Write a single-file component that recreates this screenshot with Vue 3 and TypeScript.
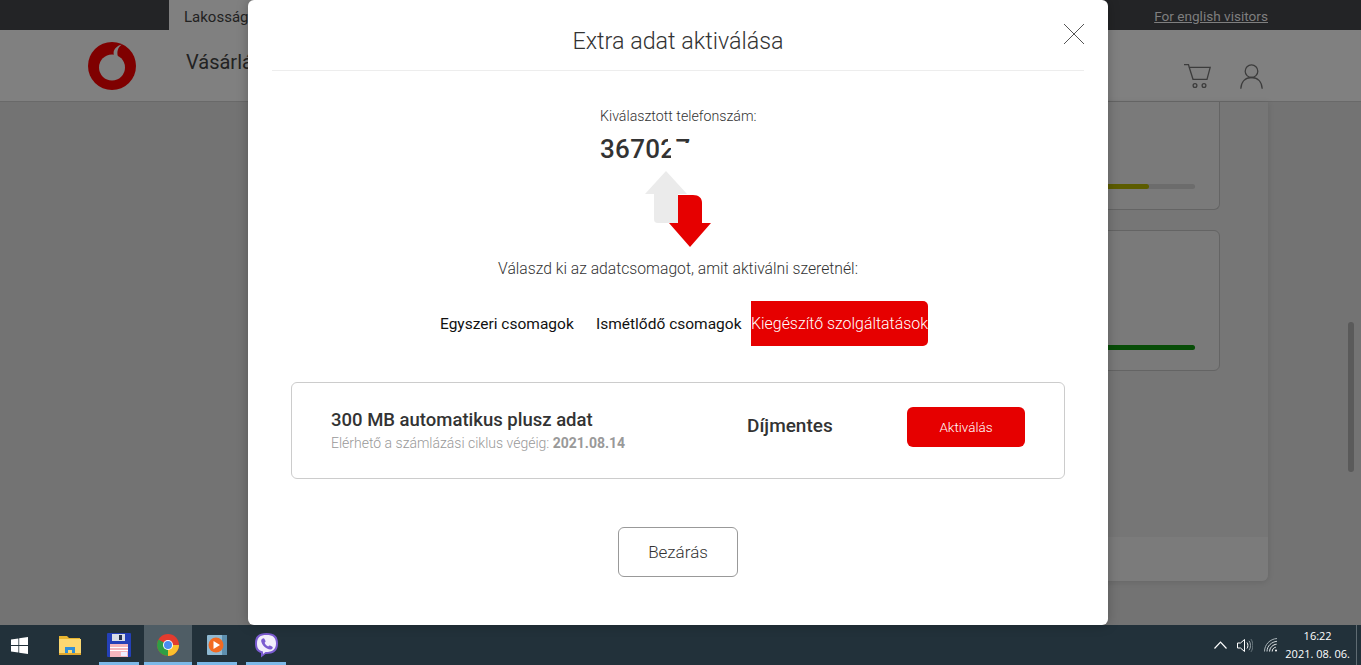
<script setup lang="ts">
interface Tab {
	label: string;
	active?: boolean;
}

const tabs: Tab[] = [
	{ label: 'Egyszeri csomagok' },
	{ label: 'Ismétlődő csomagok' },
	{ label: 'Kiegészítő szolgáltatások', active: true },
];
</script>

<template>
	<div class="page">
		<div class="topbar">
			<div class="topbar-tab">Lakosság</div>
			<a class="topbar-link">For english visitors</a>
		</div>

		<header class="header">
			<svg class="logo" width="48" height="48" viewBox="0 0 48 48">
				<circle cx="24" cy="24" r="24" fill="#7f0000" />
				<circle cx="24" cy="25.500" r="13" fill="#808080" />
				<path d="M34 2.500C29.500 3.500 26 6.500 25.600 10.500C25.500 12 26 13.500 26.500 14.500L30 15C28.500 9.500 30 5 34 2.500Z" fill="#808080" />
			</svg>
			<nav class="header-nav">Vásárlás</nav>
			<div class="header-icons">
				<svg width="27" height="25" viewBox="0 0 27 25" fill="none" stroke="#3c3c3c" stroke-width="1.3">
					<path d="M0 .7H4.500L5.200 3.300H26.200L23 15.300H9L5.200 3.300" />
					<circle cx="11" cy="21.500" r="1.900" />
					<circle cx="20" cy="21.500" r="1.900" />
				</svg>
				<svg width="23" height="25" viewBox="0 0 23 25" fill="none" stroke="#3c3c3c" stroke-width="1.3">
					<circle cx="11.500" cy="7.200" r="6.300" />
					<path d="M.8 24.800C1.200 17.500 5.500 13.500 11.500 13.500C17.500 13.500 21.800 17.500 22.200 24.800" />
				</svg>
			</div>
		</header>

		<main class="main">
			<section class="panel">
				<div class="panel-body">
					<div class="usage usage-first">
						<div class="bar"><div class="bar-fill bar-yellow"></div></div>
					</div>
					<div class="usage usage-second">
						<div class="bar"><div class="bar-fill bar-green"></div></div>
					</div>
				</div>
				<div class="panel-foot"></div>
			</section>
		</main>

		<footer class="taskbar">
			<div class="task-start">
				<svg width="17" height="17" viewBox="0 0 17 17" fill="#fff">
					<path d="M0 2.500L7.400 1.400V8H0Z" />
					<path d="M8.200 1.300L17 0V8H8.200Z" />
					<path d="M0 9H7.400V15.600L0 14.500Z" />
					<path d="M8.200 9H17V17L8.200 15.700Z" />
				</svg>
			</div>
			<div class="task-item task-folder">
				<svg width="22" height="20" viewBox="0 0 22 20">
					<path d="M0 1H8L10 3H21V18H0Z" fill="#e9b530" />
					<path d="M0 4H22V18H0Z" fill="#fbd871" />
					<path d="M6 18V12H16V18H13V15H9V18Z" fill="#2f8fd8" />
					<rect x="0" y="18" width="22" height="2" fill="#e0a82e" />
				</svg>
			</div>
			<div class="task-item task-open">
				<svg width="24" height="24" viewBox="0 0 24 24">
					<rect width="24" height="24" rx="1" fill="#2440b8" />
					<rect x="5" y="1" width="13" height="7" fill="#d8dde8" />
					<rect x="12" y="2" width="3" height="5" fill="#26324e" />
					<rect x="3" y="11" width="18" height="13" fill="#f5b7bd" />
					<rect x="3" y="14" width="18" height="1" fill="#fff" />
					<rect x="3" y="17" width="18" height="1" fill="#fff" />
					<rect x="14" y="19" width="6" height="4" fill="#eef" />
				</svg>
			</div>
			<div class="task-item task-open task-active">
				<svg width="22" height="22" viewBox="0 0 22 22">
					<circle cx="11" cy="11" r="11" fill="#e33b2e" />
					<path d="M11 11L1.500 5.500A11 11 0 0 0 11 22Z" fill="#2f9e44" />
					<path d="M11 11H22A11 11 0 0 1 11 22Z" fill="#fbc02d" />
					<circle cx="11" cy="11" r="5" fill="#fff" />
					<circle cx="11" cy="11" r="4" fill="#4a8df0" />
				</svg>
			</div>
			<div class="task-item task-open">
				<svg width="20" height="20" viewBox="0 0 20 20">
					<rect width="20" height="20" rx="1" fill="#8fb9d2" />
					<rect x="15" width="5" height="20" fill="#5e8fae" />
					<circle cx="9" cy="10" r="7.500" fill="#f26a21" />
					<path d="M6.500 6L13 10L6.500 14Z" fill="#fff" />
				</svg>
			</div>
			<div class="task-item task-open">
				<svg width="23" height="25" viewBox="0 0 23 25">
					<path d="M11.500 0C3 0 0 3.500 0 10.500C0 16 2 19 6 20V24.500L10.500 21C19 21 23 18 23 10.500C23 3.500 20 0 11.500 0Z" fill="#7a5bd0" />
					<path d="M11.500 2C5 2 2 4.500 2 10.500C2 15 3.500 17.500 8 18.500V21L10.500 19C17.500 19 21 16.500 21 10.500C21 4.500 18 2 11.500 2Z" fill="#f2eefc" />
					<path d="M7 6C8 5 9 5 9.500 6L10.500 8C10.800 8.700 10 9.300 9.600 9.800C10.300 11.500 11.500 12.700 13.200 13.400C13.800 13 14.300 12.200 15 12.500L17 13.500C18 14 18 15 17 16C15.500 17 14 16.600 12 15.500C9 13.800 7.300 11.800 6.400 9C6 7.600 6.200 6.800 7 6Z" fill="#7a5bd0" />
				</svg>
			</div>
			<div class="tray">
				<svg width="13" height="8" viewBox="0 0 13 8" fill="none" stroke="#fff" stroke-width="1.2">
					<path d="M.5 7.500L6.500 1.200L12.500 7.500" />
				</svg>
				<svg width="16" height="15" viewBox="0 0 16 15" fill="none" stroke="#fff">
					<path d="M.5 5H3.500L7.500 1.500V13.500L3.500 10H.5Z" />
					<path d="M10 4.500C11.200 6 11.200 9 10 10.500" />
					<path d="M12 2.800C14 5 14 10 12 12.200" stroke="#9aa5aa" />
					<path d="M14 1.200C16.400 4.500 16.400 10.500 14 13.800" stroke="#6f7c82" />
				</svg>
				<svg width="14" height="14" viewBox="0 0 14 14" fill="none" stroke="#f2f4f5">
					<path d="M.5 13.500C.5 6.500 6 1 13 .5" stroke="#aab4b8" />
					<path d="M3 13.500C3 8 7.500 3.800 13 3.300" stroke="#cfd6d9" />
					<path d="M5.600 13.500C5.600 9.600 8.800 6.600 12.600 6.200" />
					<path d="M8.200 13.500C8.200 11.200 9.800 9.600 11.800 9.200" />
					<circle cx="12" cy="12.600" r="1" fill="#fff" stroke="none" />
				</svg>
				<div class="clock">
					<span>16:22</span>
					<span>2021. 08. 06.</span>
				</div>
				<div class="show-desktop"></div>
			</div>
		</footer>

		<div class="scrollbar"></div>

		<div class="modal">
			<div class="modal-head">
				<h2 class="modal-title">Extra adat aktiválása</h2>
				<svg class="modal-close" width="22" height="22" viewBox="0 0 22 22" stroke="#555" stroke-width="1">
					<path d="M1 1L21 21M21 1L1 21" />
				</svg>
			</div>

			<div class="phone">
				<div class="phone-label">Kiválasztott telefonszám:</div>
				<div class="phone-number">367027<i class="mask-a"></i><i class="mask-b"></i></div>
			</div>

			<svg class="arrows" width="68" height="77" viewBox="0 0 68 77">
				<path d="M22 1L43 24H34V53H14C11 53 10 51.500 10 49V24H1Z" fill="#ebebeb" />
				<path d="M25 53H34V25H49C55 25 58 28 58 33V53H67L46 77Z" fill="#e60000" />
			</svg>

			<p class="prompt">Válaszd ki az adatcsomagot, amit aktiválni szeretnél:</p>

			<div class="tabs">
				<div v-for="tab in tabs" :key="tab.label" class="tab" :class="{ 'tab-active': tab.active }">{{ tab.label }}</div>
			</div>

			<div class="offer">
				<div class="offer-info">
					<div class="offer-name">300 MB automatikus plusz adat</div>
					<div class="offer-sub">Elérhető a számlázási ciklus végéig: <b>2021.08.14</b></div>
				</div>
				<div class="offer-price">Díjmentes</div>
				<button class="offer-btn">Aktiválás</button>
			</div>

			<button class="close-btn">Bezárás</button>
		</div>
	</div>
</template>

<style>
	body {
		overflow: hidden;
	}
</style>

<style scoped>
	.page {
		position: relative;
		display: flex;
		flex-direction: column;
		height: 665px;
		overflow: hidden;
		background: #737373;
		font-family: Roboto, "Liberation Sans", sans-serif;
	}
	.topbar {
		display: flex;
		align-items: center;
		justify-content: space-between;
		height: 30px;
		padding: 0 93px 0 169px;
		background: #232426;
		flex: none;
	}
		.topbar-tab {
			align-self: stretch;
			width: 120px;
			padding: 0 15px;
			background: #808080;
			color: #222;
			font-size: 15px;
			line-height: 35px;
		}
		.topbar-link {
			margin-top: 2px;
			color: #7f7f7f;
			font-size: 13.6px;
			text-decoration: underline;
		}
	.header {
		display: flex;
		align-items: center;
		height: 71px;
		padding: 0 98px 0 88px;
		background: #808080;
		border-bottom: 1px solid #696969;
		flex: none;
	}
		.logo {
			margin: 1px 50px 0 0;
		}
		.header-nav {
			color: #222;
			font-size: 20px;
			margin-bottom: 7px;
		}
		.header-icons {
			display: flex;
			gap: 29px;
			margin: 22px 0 0 auto;
		}
	.main {
		flex: 1;
		display: flex;
		justify-content: flex-end;
		align-items: flex-start;
		padding-right: 93px;
	}
		.panel {
			display: flex;
			flex-direction: column;
			width: 1000px;
			height: 479px;
			background: #767676;
			border-radius: 0 0 6px 6px;
			box-shadow: 0 1px 6px rgba(0, 0, 0, 0.12);
		}
			.panel-body {
				flex: 1;
				padding-right: 48px;
			}
			.usage {
				position: relative;
				border: 1px solid #646464;
				border-radius: 0 0 6px 6px;
				background: #7a7a7a;
				padding: 0 24px;
			}
			.usage-first {
				height: 107px;
				border-top: none;
			}
			.usage-second {
				height: 139px;
				margin-top: 20px;
				border-radius: 6px;
			}
			.bar {
				position: absolute;
				right: 24px;
				bottom: 20px;
				width: 900px;
				height: 5px;
				border-radius: 3px;
				background: #6c6c6c;
			}
				.bar-fill {
					height: 100%;
					border-radius: 3px;
				}
				.bar-yellow {
					width: 854px;
					background: #5c5c00;
				}
				.bar-green {
					width: 100%;
					background: #074d07;
				}
			.panel-foot {
				height: 44px;
				background: #7b7b7b;
				border-radius: 0 0 6px 6px;
			}
	.taskbar {
		display: flex;
		align-items: stretch;
		height: 40px;
		background: #22313a;
		flex: none;
	}
		.task-start {
			display: flex;
			align-items: center;
			justify-content: center;
			width: 38px;
		}
		.task-item {
			position: relative;
			display: flex;
			align-items: center;
			justify-content: center;
			width: 48px;
			margin-left: 1px;
		}
		.task-folder {
			margin-left: 8px;
		}
		.task-open::after {
			content: "";
			position: absolute;
			left: 4px;
			right: 4px;
			bottom: 0;
			height: 3px;
			background: #7cb9e8;
		}
		.task-active {
			background: #4f5d65;
		}
		.task-active::after {
			left: 0;
			right: 0;
		}
		.tray {
			display: flex;
			align-items: center;
			margin-left: auto;
			color: #fff;
		}
			.tray svg:nth-child(2) {
				margin-left: 10px;
			}
			.tray svg:nth-child(3) {
				margin-left: 11px;
			}
			.clock {
				display: flex;
				flex-direction: column;
				align-items: center;
				gap: 3px;
				margin: -2px 6px 0 7px;
				font-family: "Open Sans", sans-serif;
				font-size: 11px;
				line-height: 15px;
			}
			.show-desktop {
				align-self: stretch;
				width: 4px;
				border-left: 1px solid #5f6b72;
			}
	.scrollbar {
		position: absolute;
		left: 1348px;
		top: 322px;
		width: 6px;
		height: 150px;
		border-radius: 3px;
		background: #5a5a5a;
	}
	.modal {
		position: absolute;
		left: 248px;
		top: 0;
		display: flex;
		flex-direction: column;
		align-items: center;
		width: 860px;
		height: 625px;
		background: #fff;
		border-radius: 6px;
		box-shadow: 0 0 12px rgba(0, 0, 0, 0.25);
		color: #333;
	}
		.modal-head {
			position: relative;
			width: 812px;
			height: 70px;
			border-bottom: 1px solid #ededed;
			text-align: center;
		}
			.modal-title {
				margin: 0;
				padding-top: 25px;
				font-size: 23.3px;
				font-weight: 300;
				line-height: 32px;
				color: #333;
			}
			.modal-close {
				position: absolute;
				right: -1px;
				top: 23px;
			}
		.phone {
			align-self: flex-start;
			margin: 36px 0 0 352px;
		}
			.phone-label {
				font-size: 14.2px;
				line-height: 18px;
				font-weight: 300;
			}
			.phone-number {
				position: relative;
				margin-top: 9px;
				width: 90px;
				font-size: 26px;
				font-weight: 500;
				line-height: 30px;
				letter-spacing: 0.3px;
			}
				.mask-a {
					position: absolute;
					left: 71px;
					top: 9px;
					width: 30px;
					height: 22px;
					background: #fff;
				}
				.mask-b {
					position: absolute;
					left: 68px;
					top: 0;
					width: 6px;
					height: 14px;
					background: #fff;
				}
		.arrows {
			margin: 6px 0 0;
		}
		.prompt {
			margin: 12px 0 0;
			font-size: 15.7px;
			line-height: 20px;
			font-weight: 300;
		}
		.tabs {
			display: grid;
			grid-template-columns: 156px 155px 177px;
			margin: 22px 0 0 12px;
		}
			.tab {
				height: 45px;
				font-size: 15.5px;
				line-height: 46px;
				color: #111;
				white-space: nowrap;
			}
			.tab-active {
				background: #e60000;
				border-radius: 0 5px 5px 0;
				color: #fff;
				font-size: 15.9px;
				font-weight: 300;
				text-align: center;
			}
		.offer {
			display: flex;
			align-items: center;
			box-sizing: border-box;
			width: 774px;
			height: 97px;
			margin-top: 36px;
			padding: 0 39px;
			border: 1px solid #ccc;
			border-radius: 6px;
		}
			.offer-info {
				width: 416px;
				margin-top: -3px;
			}
				.offer-name {
					font-size: 18.500px;
					font-weight: 500;
					line-height: 24px;
					padding-top: 1px;
				}
				.offer-sub {
					margin-top: 2px;
					font-size: 14px;
					font-weight: 300;
					line-height: 18px;
					color: #999;
				}
					.offer-sub b {
						font-weight: 700;
					}
			.offer-price {
				width: 160px;
				font-size: 19px;
				font-weight: 500;
				margin-top: -11px;
			}
			.offer-btn {
				width: 118px;
				height: 40px;
				margin-top: -7px;
				border: none;
				border-radius: 6px;
				background: #e60000;
				color: #fff;
				font: 300 13.5px Roboto, sans-serif;
			}
		.close-btn {
			width: 120px;
			height: 50px;
			margin-top: 48px;
			background: #fff;
			border: 1px solid #999;
			border-radius: 6px;
			color: #333;
			font: 300 17px Roboto, sans-serif;
		}
</style>
